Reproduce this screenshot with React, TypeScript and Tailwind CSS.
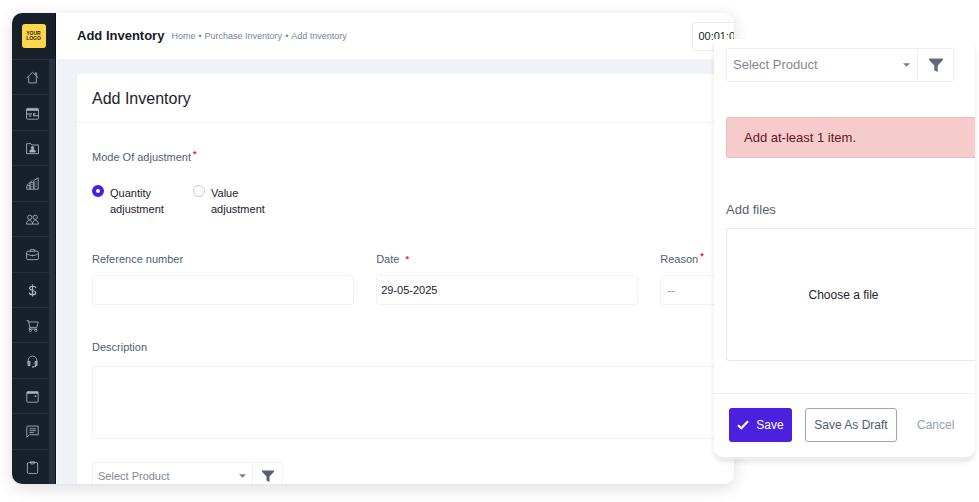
import { useState, type ReactNode } from 'react';

const navItems: { label: string; icon: ReactNode }[] = [
  {
    label: 'Home',
    icon: <path d="M1.500 12.500 12 2.500l10.500 10M5 10v12h14V10M17 7V3.500h2.500V9" />,
  },
  {
    label: 'Accounts',
    icon: (
      <>
        <rect x="1" y="2.500" width="22" height="20" rx="2" />
        <path d="M1 5h22" strokeWidth="3.500" />
        <path d="M1 13h9v-1.500M14 11.500V16h9M14 12.500h4M5 16.500h5" strokeWidth="2" />
      </>
    ),
  },
  {
    label: 'Contacts',
    icon: (
      <>
        <path d="M1 3h8l2 2.500h12V21.500H1z" />
        <path d="M7 18.500c0-7 10-7 10 0z" fill="currentColor" />
        <circle cx="12" cy="10.500" r="2.200" fill="currentColor" />
      </>
    ),
  },
  {
    label: 'Reports',
    icon: (
      <>
        <path d="M1.500 16h6v6.500h-6zM7.500 10.500h7v12h-7zM14.500 6.500l8-5v21h-8z" />
        <path d="M10 14h2M10 18h2M17.500 9h2M17.500 13h2M17.500 17h2M2 15l10-9" />
      </>
    ),
  },
  {
    label: 'Users',
    icon: (
      <>
        <circle cx="7" cy="8" r="4" />
        <circle cx="17" cy="8" r="4" />
        <path d="M1 20.500c0-9 11-9 11 0zM12 20.500c0-9 11-9 11 0z" />
      </>
    ),
  },
  {
    label: 'Jobs',
    icon: (
      <>
        <rect x="1" y="6" width="22" height="15.500" rx="2.500" />
        <path d="M8 6V3h8v3M1.500 10.500c6 4.500 15 4.500 21 0M12 12.500v3" />
      </>
    ),
  },
  {
    label: 'Finance',
    icon: (
      <path
        d="M12 1v22M18 7.500C17.500 3 6.500 3 6.500 8S18 11 18 16 6.500 21 6 16"
        strokeWidth="2.200"
      />
    ),
  },
  {
    label: 'Inventory',
    icon: (
      <>
        <path d="M1 3h3.500l2.500 12.500h13L22.500 5.500H5M7 15.500l-1.500 3h15" />
        <circle cx="8" cy="21" r="2" />
        <circle cx="18" cy="21" r="2" />
      </>
    ),
  },
  {
    label: 'Support',
    icon: (
      <>
        <path d="M4 16V10a8 8 0 0 1 16 0v6c0 4-2 6-6 6" />
        <path d="M4 12h3v7H4zM17 12h3v7h-3zM11 22h3.500" strokeWidth="2.200" />
      </>
    ),
  },
  {
    label: 'Calendar',
    icon: (
      <>
        <rect x="1.500" y="3" width="21" height="19.500" rx="2" />
        <path d="M1.500 5h21" strokeWidth="3.500" />
        <path d="M16 11.500h3" strokeWidth="3" />
      </>
    ),
  },
  {
    label: 'Messages',
    icon: <path d="M1.500 22.500V4a2 2 0 0 1 2-2h19v16h-16zM6.500 7h12M6.500 10.500h12M6.500 14h8" />,
  },
  {
    label: 'Tasks',
    icon: (
      <>
        <rect x="2.500" y="3" width="19" height="20" rx="2.500" />
        <path d="M8 1.500h8v2.500c0 2-8 2-8 0z" />
      </>
    ),
  },
];

function FunnelIcon({ className }: { className: string }) {
  return (
    <svg viewBox="0 0 16 16" className={className} fill="currentColor" aria-hidden="true">
      <path d="M0 .5h16v1.700L10 8.500V16L6 14V8.500L0 2.200z" />
    </svg>
  );
}

function CaretIcon() {
  return (
    <svg viewBox="0 0 8 4" className="h-[4px] w-[7px] shrink-0 text-[#7b8088]" fill="currentColor" aria-hidden="true">
      <path d="M0 0h8L4 4z" />
    </svg>
  );
}

function Required() {
  return <span className="text-[9px] font-bold text-[#e5252a]">*</span>;
}

function Sidebar() {
  return (
    <aside className="flex w-[44px] shrink-0 flex-col border-r border-[#0c131c] bg-[#17202b]">
      <a href="#" className="flex h-[46px] shrink-0 items-center justify-center">
        <span className="flex h-6 w-6 items-center justify-center rounded-[3px] bg-[#ffd54a] text-center text-[5px] leading-[5px] font-black text-[#22201a]">
          YOUR
          <br />
          LOGO
        </span>
      </a>
      <nav className="flex flex-1 flex-col border-r-[6px] border-[#28313d]">
        {navItems.map((item) => (
          <a
            key={item.label}
            href="#"
            aria-label={item.label}
            className="flex flex-1 items-center justify-center border-t border-[#252e3a] pt-px pl-1 text-[#a9b4c4]"
          >
            <svg
              viewBox="0 0 24 24"
              className="h-[13px] w-[13px]"
              fill="none"
              stroke="currentColor"
              strokeWidth="1.6"
              strokeLinejoin="round"
            >
              {item.icon}
            </svg>
          </a>
        ))}
      </nav>
    </aside>
  );
}

function Header() {
  return (
    <header className="flex h-[46px] shrink-0 items-center bg-white px-5">
      <h1 className="text-[13px] font-bold text-[#161c26]">Add Inventory</h1>
      <nav className="ml-[7px] flex gap-[3px] pt-px text-[9px] text-[#76869c]">
        <a href="#">Home</a>
        <span>•</span>
        <a href="#">Purchase Inventory</a>
        <span>•</span>
        <a href="#">Add Inventory</a>
      </nav>
      <div className="ml-auto w-[245px]">
        <time className="flex h-[29px] w-20 items-center rounded-[3px] border border-[#e6eaf0] pl-[5px] text-[11px] text-[#161c26]">
          00:01:0
        </time>
      </div>
    </header>
  );
}

function InventoryForm() {
  const [mode, setMode] = useState('Quantity');
  const control = 'h-[30px] w-full rounded-[3px] border border-[#f0f2f8] bg-white text-[11px]';

  return (
    <form className="mx-5 mt-[15px] rounded-t-[3px] bg-white text-[11px] leading-4 text-[#4f5f73]">
      <h2 className="flex h-[49px] items-center border-b border-[#f1f3f8] px-[15px] pt-px text-base text-[#1b222c]">
        Add Inventory
      </h2>
      <div className="px-[15px] pt-[26px]">
        <fieldset>
          <legend className="flex">
            Mode Of adjustment
            <span className="-mt-1 ml-[2px]">
              <Required />
            </span>
          </legend>
          <div className="mt-5 flex gap-[30px]">
            {['Quantity', 'Value'].map((name) => (
              <label key={name} className="flex w-[71px] items-start gap-[6px] text-[#1b222c]">
                <input
                  type="radio"
                  name="mode"
                  checked={mode === name}
                  onChange={() => setMode(name)}
                  className="h-3 w-3 shrink-0 appearance-none rounded-full border border-[#c3cad5] bg-white checked:border-4 checked:border-[#4a1fe0]"
                />
                {name} adjustment
              </label>
            ))}
          </div>
        </fieldset>

        <div className="mt-[34px] grid grid-cols-3 gap-x-[22px]">
          <div>
            <label htmlFor="reference" className="mb-2 block">
              Reference number
            </label>
            <input id="reference" type="text" className={control} />
          </div>
          <div>
            <label htmlFor="date" className="mb-2 flex gap-[6px]">
              Date <Required />
            </label>
            <input
              id="date"
              type="text"
              defaultValue="29-05-2025"
              className={`${control} px-1 text-[#1b222c]`}
            />
          </div>
          <div>
            <label htmlFor="reason" className="mb-2 flex gap-[2px]">
              Reason
              <span className="-mt-1">
                <Required />
              </span>
            </label>
            <select id="reason" className={`${control} appearance-none px-[6px] text-[#8a9099]`}>
              <option>--</option>
            </select>
          </div>
        </div>

        <label htmlFor="description" className="mt-[34px] block">
          Description
        </label>
        <textarea
          id="description"
          className="mt-[11px] block h-[73px] w-full resize-none rounded-[3px] border border-[#f0f2f8] bg-white"
        />

        <div className="mt-[23px] flex h-7 w-[191px] rounded-[3px] border border-[#f0f2f8]">
          <div className="flex flex-1 items-center border-r border-[#f0f2f8] pr-[6px]">
            <select
              aria-label="Product"
              className="min-w-0 flex-1 appearance-none bg-transparent pl-[5px] text-[#83878d]"
            >
              <option>Select Product</option>
            </select>
            <CaretIcon />
          </div>
          <button type="button" aria-label="Filter" className="flex w-[29px] items-center justify-center">
            <FunnelIcon className="h-3 w-3 text-[#59616f]" />
          </button>
        </div>
      </div>
    </form>
  );
}

function ProductPanel() {
  return (
    <section className="absolute top-[39px] right-1 w-[261px] overflow-hidden rounded-[10px] rounded-tl-none border-b-2 border-[#eceef0] bg-white pt-[9px] text-[13px] leading-4 text-[#56616f] shadow-[0_3px_5px_rgba(0,0,0,0.1)]">
      <div className="pl-3">
        <div className="mr-[21px] flex h-[34px] rounded-[3px] border border-[#eceff6]">
          <div className="flex flex-1 items-center border-r border-[#eceff6] pr-[7px]">
            <select
              aria-label="Product"
              className="min-w-0 flex-1 appearance-none bg-transparent pl-[6px] text-[#83878d]"
            >
              <option>Select Product</option>
            </select>
            <CaretIcon />
          </div>
          <button type="button" aria-label="Filter" className="flex w-[35px] items-center justify-center">
            <FunnelIcon className="h-[14px] w-[14px] text-[#626a78]" />
          </button>
        </div>

        <div
          role="alert"
          className="mt-[35px] flex h-[41px] items-center rounded-l-[3px] border border-r-0 border-[#f1b9bd] bg-[#f6cbcc] pl-[17px] text-[#65141b]"
        >
          Add at-least 1 item.
        </div>

        <p className="mt-11">Add files</p>
        <label className="mt-[10px] flex h-[133px] items-center justify-center rounded-l-[3px] border border-r-0 border-[#e6e8ec] pr-[15px] text-xs text-[#1b222c]">
          Choose a file
          <input type="file" className="hidden" />
        </label>
      </div>

      <div className="mt-8 flex items-center border-t border-[#eff1f6] px-[15px] pt-[14px] pb-[15px] text-xs">
        <button
          type="button"
          className="flex h-[34px] w-[63px] items-center justify-center gap-[7px] rounded-[3px] bg-[#4b20df] text-white"
        >
          <svg
            viewBox="0 0 12 10"
            className="h-[10px] w-3"
            fill="none"
            stroke="currentColor"
            strokeWidth="2.2"
            aria-hidden="true"
          >
            <path d="M1 5.200 4.300 8.300 11 1.300" />
          </svg>
          Save
        </button>
        <button
          type="button"
          className="ml-[13px] h-[34px] w-[92px] shrink-0 rounded-[3px] border border-[#9ca3b2] text-[#4f5b6c]"
        >
          Save As Draft
        </button>
        <button type="button" className="ml-5 text-[#94a0b0]">
          Cancel
        </button>
      </div>
    </section>
  );
}

export default function App() {
  return (
    <div className="relative h-screen overflow-hidden bg-white pt-[13px] pr-[245px] pb-[18px] pl-3 font-['Liberation_Sans',Arial,sans-serif]">
      <div className="flex h-full overflow-hidden rounded-[10px] bg-[#f1f2f7] shadow-[0_4px_16px_rgba(0,0,0,0.14)]">
        <Sidebar />
        <div className="min-w-0 flex-1 overflow-hidden border-l border-white">
          <main className="w-[133%]">
            <Header />
            <InventoryForm />
          </main>
        </div>
      </div>
      <ProductPanel />
    </div>
  );
}
